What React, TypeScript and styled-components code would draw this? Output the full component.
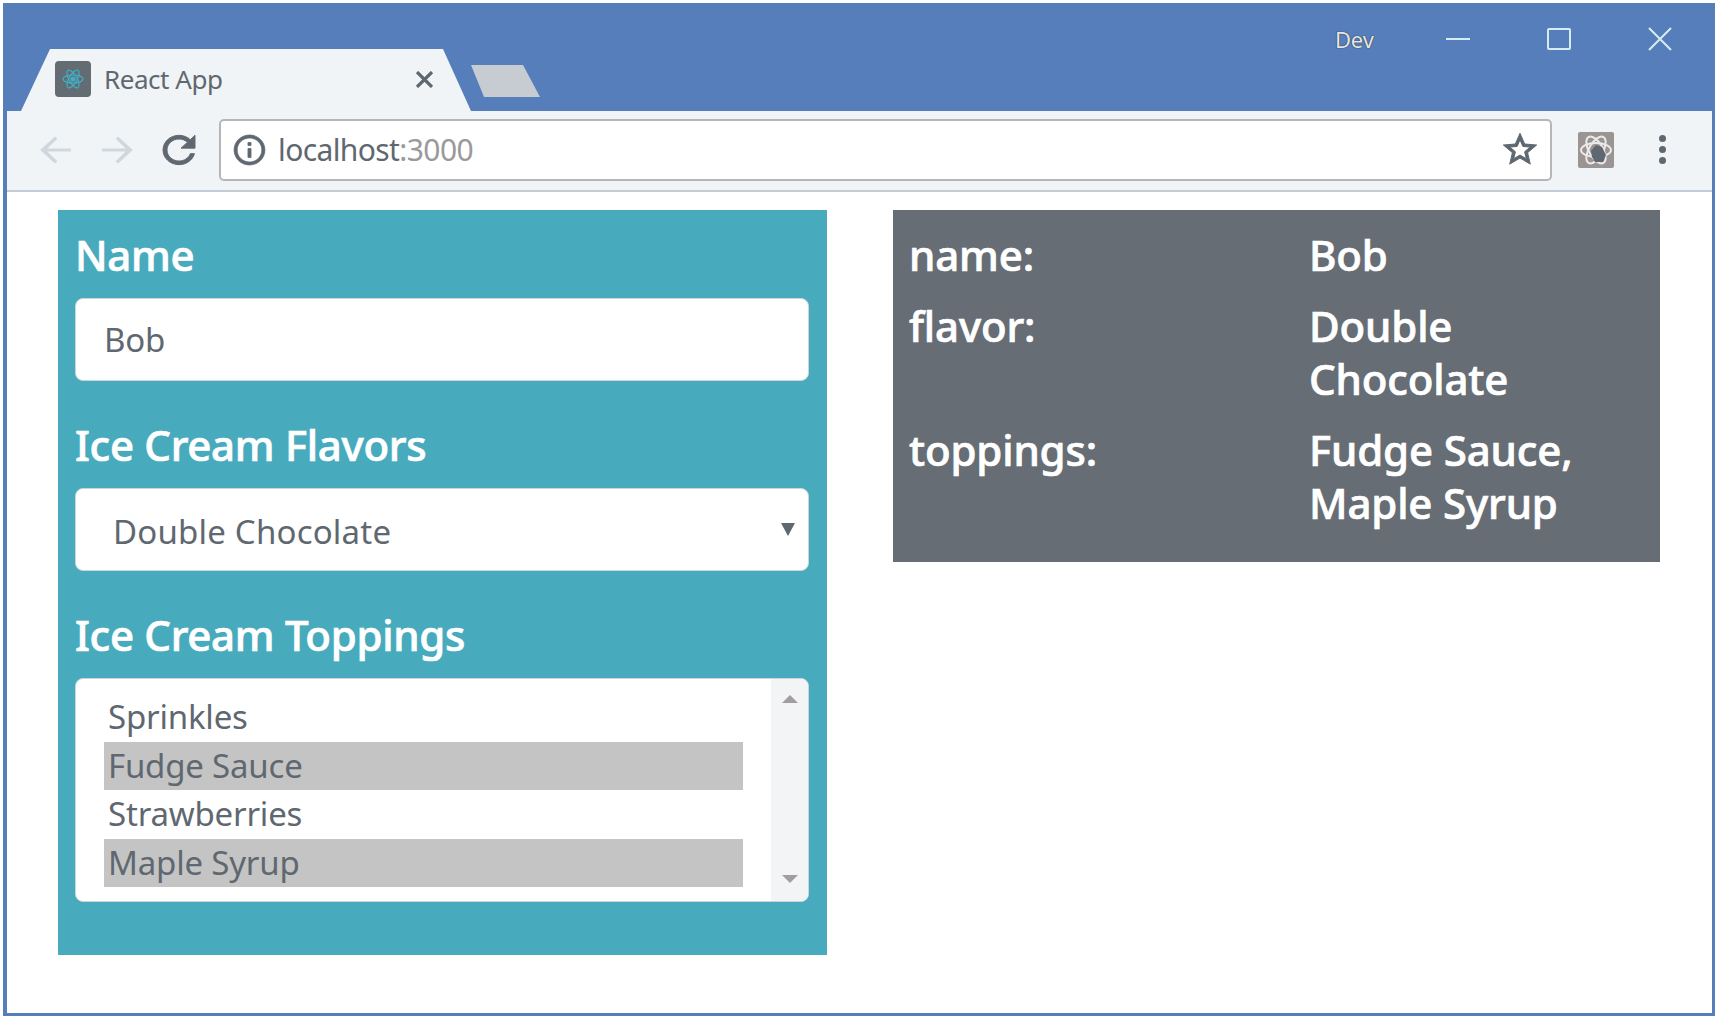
import styled, { createGlobalStyle } from "styled-components"

const GlobalStyle = createGlobalStyle`
  html, body {
    margin: 0;
    padding: 0;
    background: #fff;
  }
  body {
    font-family: "Noto Sans", "Open Sans", sans-serif;
  }
  * {
    box-sizing: border-box;
  }
`

const flavorRows = [
  { label: "name:", lines: ["Bob"] },
  { label: "flavor:", lines: ["Double", "Chocolate"] },
  { label: "toppings:", lines: ["Fudge Sauce,", "Maple Syrup"] },
]

const toppings = [
  { name: "Sprinkles", selected: false },
  { name: "Fudge Sauce", selected: true },
  { name: "Strawberries", selected: false },
  { name: "Maple Syrup", selected: true },
]

const ToolIcon = ({ d, color, w, h, bold = 0 }: { d: string; color: string; w: number; h: number; bold?: number }) => (
  <svg width={w} height={h} viewBox="0 0 24 24" preserveAspectRatio="none" fill={color} stroke={color} strokeWidth={bold}>
    <path d={d} />
  </svg>
)

const BACK = "M21 11H7.2l5.9-6.1L11.7 3.4 3 12l8.7 8.6 1.4-1.5L7.2 13H21z"
const FORWARD = "M3 11h13.8l-5.9-6.1 1.4-1.5L21 12l-8.7 8.6-1.4-1.5 5.9-6.1H3z"
const RELOAD = "M17.65 6.35C16.2 4.9 14.21 4 12 4c-4.42 0-7.99 3.58-7.99 8s3.57 8 7.99 8c3.73 0 6.84-2.55 7.73-6h-2.08c-.82 2.33-3.04 4-5.65 4-3.31 0-6-2.69-6-6s2.69-6 6-6c1.66 0 3.14.69 4.22 1.78L13 11h7V4l-2.35 2.35z"
const INFO = "M11 7h2v2h-2zm0 4h2v6h-2zm1-9C6.48 2 2 6.48 2 12s4.48 10 10 10 10-4.48 10-10S17.52 2 12 2zm0 18c-4.41 0-8-3.59-8-8s3.59-8 8-8 8 3.59 8 8-3.59 8-8 8z"
const STAR = "M22 9.24l-7.19-.62L12 2 9.19 8.63 2 9.24l5.46 4.73L5.82 21 12 17.27 18.18 21l-1.63-7.03L22 9.24zM12 15.4l-3.76 2.27 1-4.28-3.32-2.88 4.38-.38L12 6.1l1.71 4.04 4.38.38-3.32 2.88 1 4.28L12 15.4z"

export default function App() {
  return (
    <>
      <GlobalStyle />
      <Screen>
        <Window>
          <TabStrip>
            <Tab>
              <Favicon>
                <svg width="26" height="26" viewBox="0 0 26 26" fill="none" stroke="#3fb0c6" strokeWidth="1.2">
                  <ellipse cx="13" cy="13" rx="10" ry="4" />
                  <ellipse cx="13" cy="13" rx="10" ry="4" transform="rotate(60 13 13)" />
                  <ellipse cx="13" cy="13" rx="10" ry="4" transform="rotate(120 13 13)" />
                  <circle cx="13" cy="13" r="2" fill="#3fb0c6" />
                </svg>
              </Favicon>
              <TabTitle>React App</TabTitle>
              <TabClose>
                <svg width="19" height="17" viewBox="0 0 19 17" stroke="#5f6870" strokeWidth="3.2" fill="none">
                  <path d="M2 1l15 15M17 1L2 16" />
                </svg>
              </TabClose>
            </Tab>
            <NewTab />
            <Caption>
              <DevLabel>Dev</DevLabel>
              <CaptionButton>
                <svg width="24" height="24" viewBox="0 0 24 24" stroke="#d7ecf2" strokeWidth="2" fill="none">
                  <path d="M0 12h24" />
                </svg>
              </CaptionButton>
              <CaptionButton>
                <svg width="24" height="24" viewBox="0 0 24 24" stroke="#d7ecf2" strokeWidth="2" fill="none">
                  <rect x="1" y="2" width="22" height="20" rx="1" />
                </svg>
              </CaptionButton>
              <CaptionButton>
                <svg width="24" height="24" viewBox="0 0 24 24" stroke="#d7ecf2" strokeWidth="2" fill="none">
                  <path d="M1 1l22 22M23 1L1 23" />
                </svg>
              </CaptionButton>
            </Caption>
          </TabStrip>

          <Toolbar>
            <NavButtons>
              <ToolIcon d={BACK} color="#d0d7dc" w={41} h={38} />
              <ToolIcon d={FORWARD} color="#d0d7dc" w={41} h={38} />
              <ReloadSlot>
                <ToolIcon d={RELOAD} color="#5f6870" w={48} h={44} bold={0.5} />
              </ReloadSlot>
            </NavButtons>
            <AddressBar>
              <ToolIcon d={INFO} color="#5f6870" w={37} h={36} bold={0.5} />
              <Url>
                localhost<UrlPort>:3000</UrlPort>
              </Url>
              <StarSlot>
                <ToolIcon d={STAR} color="#5f6870" w={40} h={39} bold={0.6} />
              </StarSlot>
            </AddressBar>
            <ExtensionIcon>
              <svg width="36" height="36" viewBox="0 0 36 36">
                <g fill="none" stroke="#eceaea" strokeWidth="2">
                  <ellipse cx="18" cy="18" rx="15" ry="7" />
                  <ellipse cx="18" cy="18" rx="15" ry="7" transform="rotate(60 18 18)" />
                  <ellipse cx="18" cy="18" rx="15" ry="7" transform="rotate(120 18 18)" />
                </g>
                <path d="M13 19l5-6 6 2 4 8-3 7-8 0-3-5z" fill="#5f6870" />
              </svg>
            </ExtensionIcon>
            <MenuDots>
              <Dot />
              <Dot />
              <Dot />
            </MenuDots>
          </Toolbar>

          <Content>
            <FormPanel>
              <FieldLabel>Name</FieldLabel>
              <TextField>Bob</TextField>

              <FieldLabel>Ice Cream Flavors</FieldLabel>
              <SelectField>
                Double Chocolate
                <SelectArrow />
              </SelectField>

              <FieldLabel>Ice Cream Toppings</FieldLabel>
              <ListField>
                <ListItems>
                  {toppings.map((t) => (
                    <ListItem key={t.name} $selected={t.selected}>
                      {t.name}
                    </ListItem>
                  ))}
                </ListItems>
                <ScrollTrack>
                  <ScrollArrow $up />
                  <ScrollArrow />
                </ScrollTrack>
              </ListField>
            </FormPanel>

            <SummaryPanel>
              {flavorRows.map((row) => (
                <SummaryRow key={row.label}>
                  <SummaryKey>{row.label}</SummaryKey>
                  <div>
                    {row.lines.map((line) => (
                      <SummaryLine key={line}>{line}</SummaryLine>
                    ))}
                  </div>
                </SummaryRow>
              ))}
            </SummaryPanel>
          </Content>
        </Window>
      </Screen>
    </>
  )
}

const Screen = styled.div`
  width: 1718px;
  height: 1019px;
  padding: 3px 3px 3px 3px;
  background: #fff;
  overflow: hidden;
`

const Window = styled.div`
  height: 1013px;
  display: flex;
  flex-direction: column;
  border: solid #567eba;
  border-width: 0 3px 3px 4px;
  background: #fff;
`

const TabStrip = styled.div`
  height: 108px;
  flex: none;
  display: flex;
  align-items: flex-end;
  padding-left: 14px;
  background: #567eba;
`

const Tab = styled.div`
  width: 450px;
  height: 62px;
  display: flex;
  align-items: center;
  padding: 0 37px 2px 34px;
  background: #f1f4f6;
  clip-path: polygon(29px 0, 422px 0, 100% 100%, 0 100%);
`

const Favicon = styled.div`
  width: 36px;
  height: 36px;
  flex: none;
  display: flex;
  align-items: center;
  justify-content: center;
  border-radius: 4px;
  background: #636b73;
`

const TabTitle = styled.span`
  margin-left: 13px;
  font-size: 26px;
  color: #5f6870;
  letter-spacing: -0.45px;
`

const TabClose = styled.div`
  margin-left: auto;
  display: flex;
`

const NewTab = styled.div`
  width: 69px;
  height: 32px;
  margin-bottom: 14px;
  background: #c6ccd1;
  clip-path: polygon(0 0, 52px 0, 100% 100%, 13px 100%);
`

const Caption = styled.div`
  align-self: flex-start;
  margin-left: auto;
  padding-top: 24px;
  padding-right: 40px;
  display: flex;
  align-items: flex-start;
`

const DevLabel = styled.span`
  width: 111px;
  font-size: 22px;
  line-height: 24px;
  color: #e4e7ea;
  text-shadow: 0 0 1px #333, 0 0 1px #333;
  letter-spacing: -0.2px;
`

const CaptionButton = styled.div`
  width: 24px;
  height: 24px;
  display: flex;
  & + & {
    margin-left: 77px;
  }
`

const Toolbar = styled.div`
  height: 81px;
  flex: none;
  display: flex;
  align-items: center;
  padding: 0 0 2px 28px;
  background: #f1f4f7;
  border-bottom: 2px solid #c3ccd6;
`

const NavButtons = styled.div`
  width: 184px;
  display: flex;
  align-items: center;
  gap: 21px;
`

const ReloadSlot = styled.div`
  display: flex;
  margin-left: -4px;
`

const AddressBar = styled.div`
  width: 1333px;
  height: 62px;
  display: flex;
  align-items: center;
  padding-left: 10px;
  background: #fff;
  border: 2px solid #b4b6b8;
  border-radius: 5px;
`

const Url = styled.span`
  margin-left: 10px;
  font-size: 30px;
  color: #5f6870;
  letter-spacing: -0.6px;
`

const UrlPort = styled.span`
  color: #9a9a9c;
`

const StarSlot = styled.div`
  margin-left: auto;
  margin-right: 10px;
  display: flex;
`

const ExtensionIcon = styled.div`
  width: 36px;
  height: 36px;
  margin-left: 26px;
  display: flex;
  border-radius: 2px;
  background: #9a9492;
`

const MenuDots = styled.div`
  margin-left: 45px;
  display: flex;
  flex-direction: column;
  gap: 4px;
`

const Dot = styled.span`
  width: 7px;
  height: 7px;
  border-radius: 50%;
  background: #5f6870;
`

const Content = styled.div`
  flex: 1;
  display: flex;
  align-items: flex-start;
  gap: 66px;
  padding: 18px 0 0 51px;
`

const FormPanel = styled.div`
  width: 769px;
  height: 745px;
  padding: 18px 18px 0 17px;
  background: #48abbd;
`

const FieldLabel = styled.div`
  height: 70px;
  font-size: 42px;
  line-height: 54px;
  font-weight: 500;
  letter-spacing: -0.3px;
  -webkit-text-stroke: 0.7px #fff;
  color: #fff;
`

const TextField = styled.div`
  height: 83px;
  margin-bottom: 37px;
  padding-left: 28px;
  display: flex;
  align-items: center;
  font-size: 33px;
  letter-spacing: -0.2px;
  color: #5f6870;
  background: #fff;
  border: 1px solid #c9d6dc;
  border-radius: 8px;
`

const SelectField = styled(TextField)`
  position: relative;
  padding: 3px 0 0 37px;
  letter-spacing: 0.2px;
`

const SelectArrow = styled.span`
  position: absolute;
  right: 13px;
  top: 34px;
  border-style: solid;
  border-width: 13px 7px 0;
  border-color: #5f6870 transparent transparent;
`

const ListField = styled.div`
  height: 224px;
  display: flex;
  background: #fff;
  border: 1px solid #c9d6dc;
  border-radius: 8px;
  overflow: hidden;
`

const ListItems = styled.div`
  flex: 1;
  padding: 14px 28px 0 28px;
`

const ListItem = styled.div<{ $selected: boolean }>`
  height: 48.5px;
  padding-left: 4px;
  font-size: 33px;
  line-height: 48px;
  letter-spacing: -0.2px;
  color: #5f6870;
  background: ${(p) => (p.$selected ? "#c4c4c4" : "transparent")};
`

const ScrollTrack = styled.div`
  width: 37px;
  flex: none;
  display: flex;
  flex-direction: column;
  justify-content: space-between;
  align-items: center;
  padding: 16px 0 18px;
  background: #f2f4f5;
`

const ScrollArrow = styled.span<{ $up?: boolean }>`
  border-style: solid;
  border-color: transparent;
  border-width: ${(p) => (p.$up ? "0 8px 8px" : "8px 8px 0")};
  border-bottom-color: ${(p) => (p.$up ? "#a39d9d" : "transparent")};
  border-top-color: ${(p) => (p.$up ? "transparent" : "#a39d9d")};
`

const SummaryPanel = styled.div`
  width: 767px;
  height: 352px;
  padding: 18px 18px 0 16px;
  color: #fff;
  background: #666d75;
`

const SummaryRow = styled.div`
  display: grid;
  grid-template-columns: 400px 1fr;
  padding-bottom: 18px;
`

const SummaryKey = styled.div`
  font-size: 42px;
  line-height: 53px;
  font-weight: 500;
  letter-spacing: -0.15px;
  -webkit-text-stroke: 0.7px #fff;
`

const SummaryLine = styled(SummaryKey)``
